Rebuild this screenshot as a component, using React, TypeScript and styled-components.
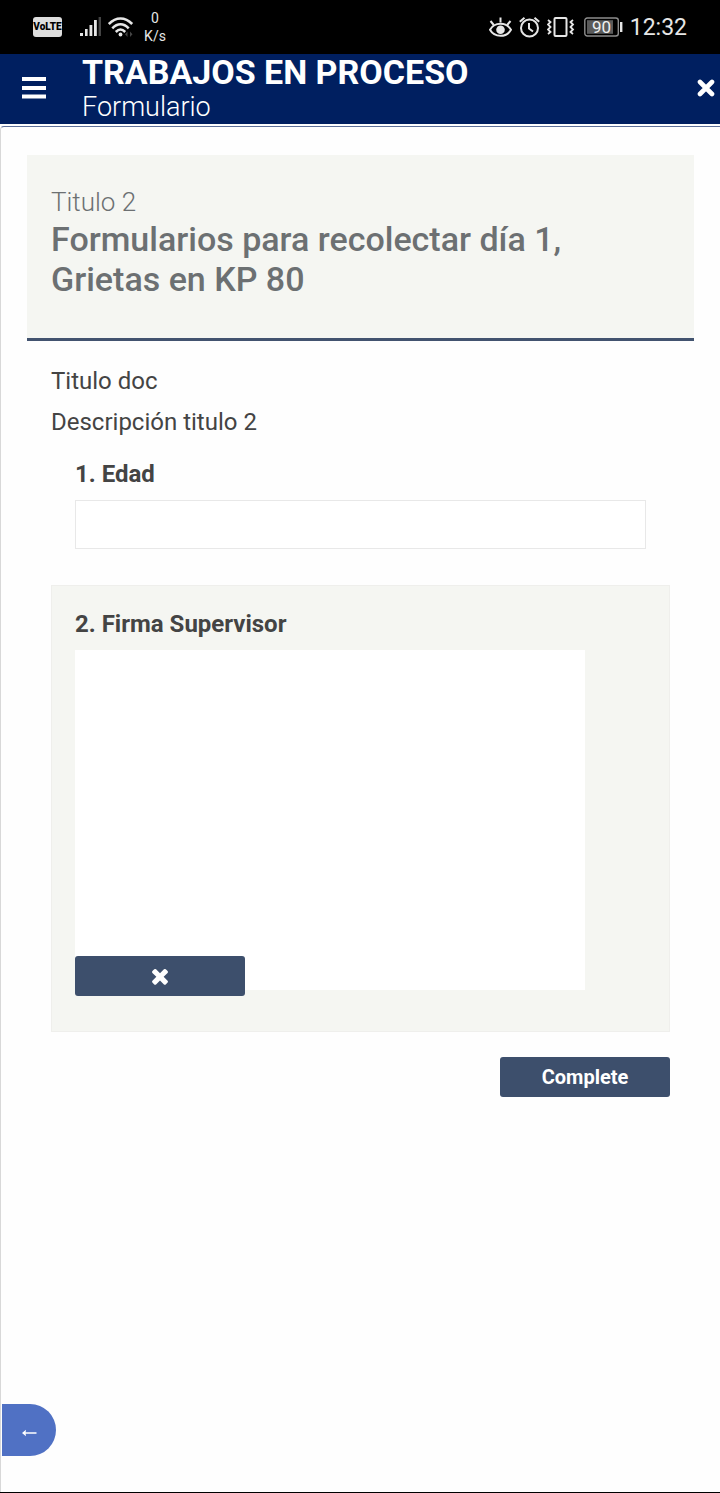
import React from "react";
import styled, { createGlobalStyle } from "styled-components";

const GlobalStyle = createGlobalStyle`
  *, *::before, *::after { box-sizing: border-box; }
  body { margin: 0; background: #fefefe; }
  body, button, input { font-family: Roboto, "Liberation Sans", sans-serif; }
  h1, h2, p { margin: 0; }
`;

const Page = styled.div`
  min-height: 100vh;
  display: flex;
  flex-direction: column;
  border-bottom: 1px solid #000;
`;

const StatusBar = styled.div`
  height: 54px;
  padding: 0 33px;
  display: flex;
  align-items: center;
  justify-content: space-between;
  background: #000;
  color: #e6e6e6;
`;

const StatusGroup = styled.div<{ $gap: number }>`
  display: flex;
  align-items: center;
  gap: ${(p) => p.$gap}px;
  svg { display: block; flex: none; }
`;

const VolteBadge = styled.span`
  width: 29px;
  height: 20px;
  margin-right: 12px;
  border-radius: 3px;
  background: #dedede;
  color: #000;
  font-size: 10px;
  font-weight: 900;
  line-height: 20px;
  text-align: center;
`;

const NetSpeed = styled.span`
  width: 24px;
  margin-left: 3px;
  font-size: 14px;
  line-height: 18px;
  text-align: center;
`;

const Clock = styled.span`
  padding-top: 2px;
  font-size: 23px;
  line-height: 28px;
`;

const Header = styled.header`
  height: 70px;
  padding: 0 5px 2px 22px;
  display: flex;
  align-items: center;
  background: #001f60;
  color: #fff;
`;

const Titles = styled.div`
  flex: 1;
  margin-left: 36px;
`;

const AppTitle = styled.h1`
  font-size: 34px;
  font-weight: 700;
  line-height: 36px;
`;

const AppSubtitle = styled.p`
  font-size: 27px;
  font-weight: 300;
  line-height: 32px;
  padding-top: 1px;
`;

const IconButton = styled.button`
  display: block;
  padding: 0;
  border: 0;
  background: none;
  color: inherit;
  cursor: pointer;
  svg { display: block; }
`;

const Content = styled.main`
  flex: 1;
  margin-top: 2px;
  padding: 28px 26px;
  border-top: 1px solid #5d6f98;
  border-left: 1px solid #d8d8d8;
  border-top-left-radius: 4px;
`;

const Banner = styled.section`
  height: 186px;
  padding: 30px 24px;
  border-bottom: 3px solid #42536f;
  background: #f5f6f2;
  color: #6c7072;
`;

const BannerLabel = styled.p`
  font-size: 26px;
  font-weight: 300;
  line-height: 34px;
`;

const BannerTitle = styled.h2`
  font-size: 34px;
  font-weight: 500;
  line-height: 40px;
`;

const Form = styled.form`
  padding: 20px 24px 0;
  color: #444;
`;

const Text = styled.p`
  font-size: 24px;
  line-height: 41px;
`;

const Field = styled.div<{ $shaded?: boolean }>`
  padding: ${(p) => (p.$shaded ? "24px 23px 35px" : "17px 24px 36px")};
  border: ${(p) => (p.$shaded ? "1px solid #efefec" : "0")};
  background: ${(p) => (p.$shaded ? "#f5f6f2" : "transparent")};
`;

const FieldLabel = styled.label`
  display: block;
  margin-bottom: 11px;
  font-size: 24px;
  font-weight: 700;
  line-height: 29px;
`;

const TextInput = styled.input`
  display: block;
  width: 100%;
  height: 49px;
  padding: 0 12px;
  border: 1px solid #e8e8e8;
  border-radius: 0;
  background: #fff;
  font-size: 24px;
`;

const SignaturePad = styled.canvas`
  display: block;
  width: 100%;
  max-width: 510px;
  height: 340px;
  background: #fff;
`;

const ActionButton = styled.button<{ $overlap?: boolean }>`
  display: flex;
  align-items: center;
  justify-content: center;
  position: relative;
  width: 170px;
  height: 40px;
  margin-top: ${(p) => (p.$overlap ? "-34px" : "0")};
  padding: 0;
  border: 0;
  border-radius: 3px;
  background: #3d4f6c;
  color: #fff;
  font-size: 20px;
  font-weight: 700;
  cursor: pointer;
`;

const Actions = styled.div`
  display: flex;
  justify-content: flex-end;
  padding-top: 25px;
`;

const BackButton = styled.button`
  position: fixed;
  left: 2px;
  bottom: 37px;
  display: flex;
  align-items: center;
  width: 54px;
  height: 52px;
  padding: 6px 0 0 20px;
  border: 0;
  border-radius: 0 26px 26px 0;
  background: #5071c4;
  color: #fff;
  cursor: pointer;
`;

const SignalIcon = () => (
  <svg width="22" height="22" viewBox="0 0 22 22" fill="#e6e6e6">
    <rect x="0" y="17" width="3" height="3" />
    <rect x="5" y="13" width="2.6" height="7" />
    <rect x="9.5" y="9" width="2.8" height="11" />
    <rect x="14" y="4" width="2.8" height="16" />
    <rect x="18.6" y="1" width="2.4" height="19" fill="#444" />
  </svg>
);

const WifiIcon = () => (
  <svg width="26" height="22" viewBox="0 0 26 22" fill="none" stroke="#e6e6e6" strokeWidth="2.6">
    <path d="M.8 8C8 .6 17 .6 24.200 8" />
    <path d="M4.300 12.300C9.500 6.900 15.500 6.900 20.700 12.300" />
    <path d="M7.800 16C11 12.700 14 12.700 17.200 16" />
    <circle cx="12.500" cy="18.500" r="1.900" fill="#e6e6e6" stroke="none" />
    <path d="m19.500 15.500-2.500 2.700 2.500 2.700zM22 15.500l2.500 2.700L22 20.900z" fill="#444" stroke="none" />
  </svg>
);

const EyeIcon = () => (
  <svg width="23" height="22" viewBox="0 0 23 22" fill="none" stroke="#e6e6e6" strokeWidth="2">
    <path d="M1 13.800C5.500 5.800 17.500 5.800 22 13.800C17.500 21.800 5.500 21.800 1 13.800Z" />
    <circle cx="11.500" cy="13.800" r="4.300" fill="#e6e6e6" stroke="none" />
    <path d="M11.500 1.500v5M1.500 5l3.300 4M21.500 5l-3.300 4" />
  </svg>
);

const AlarmIcon = () => (
  <svg width="21" height="22" viewBox="0 0 21 22" fill="none" stroke="#e6e6e6" strokeWidth="2">
    <circle cx="10.500" cy="12" r="8.500" />
    <path d="M10 7v5.500l4 3M.8 5.800 5.500 1.800M20.200 5.800l-4.700-4" />
  </svg>
);

const VibrateIcon = () => (
  <svg width="30" height="22" viewBox="0 0 30 22" fill="none" stroke="#e6e6e6" strokeWidth="2">
    <rect x="7.500" y="2" width="12" height="18" rx="1" />
    <path d="m1 4 2.500 2L1 8.500 3.500 11 1 13.500 3.500 16 1 18M26 4l-2.500 2L26 8.500 23.500 11l2.500 2.500-2.500 2.500 2.500 2" strokeWidth="1.800" />
  </svg>
);

const BatteryIcon = () => (
  <svg width="39" height="20" viewBox="0 0 39 20">
    <rect x=".8" y="1" width="33.500" height="18" rx="2.500" fill="none" stroke="#8c8c8c" strokeWidth="1.400" />
    <rect x="3" y="3.200" width="26" height="13.600" fill="#5a5a5a" />
    <rect x="36" y="5" width="2.400" height="10" fill="#e6e6e6" />
    <text x="17.500" y="15.700" textAnchor="middle" fontFamily="Roboto, sans-serif" fontSize="17" fill="#f0f0f0">90</text>
  </svg>
);

const MenuIcon = () => (
  <svg width="24" height="22" viewBox="0 0 24 22" fill="currentColor">
    <rect y="0" width="24" height="4" />
    <rect y="9" width="24" height="4" />
    <rect y="17.500" width="24" height="4" />
  </svg>
);

const CloseIcon = () => (
  <svg width="18" height="18" viewBox="0 0 18 18" fill="none" stroke="currentColor" strokeWidth="4.600" strokeLinecap="round">
    <path d="m3 3 12 12M15 3 3 15" />
  </svg>
);

const ClearIcon = () => (
  <svg width="24" height="24" viewBox="0 0 1792 1792" fill="currentColor">
    <path d="M1490 1322q0 40-28 68l-136 136q-28 28-68 28t-68-28l-294-294-294 294q-28 28-68 28t-68-28l-136-136q-28-28-28-68t28-68l294-294-294-294q-28-28-28-68t28-68l136-136q28-28 68-28t68 28l294 294 294-294q28-28 68-28t68 28l136 136q28 28 28 68t-28 68l-294 294 294 294q28 28 28 68z" />
  </svg>
);

const BackIcon = () => (
  <svg width="15" height="8" viewBox="0 0 15 8">
    <path d="M3 4h11.500" stroke="currentColor" strokeWidth="1.500" />
    <path d="M0 4 4 .8 3.500 4 4 7.200z" fill="currentColor" />
  </svg>
);

export default function App() {
  return (
    <>
      <GlobalStyle />
      <Page>
        <StatusBar>
          <StatusGroup $gap={6}>
            <VolteBadge>VoLTE</VolteBadge>
            <SignalIcon />
            <WifiIcon />
            <NetSpeed>0<br />K/s</NetSpeed>
          </StatusGroup>
          <StatusGroup $gap={7}>
            <EyeIcon />
            <AlarmIcon />
            <VibrateIcon />
            <BatteryIcon />
            <Clock>12:32</Clock>
          </StatusGroup>
        </StatusBar>
        <Header>
          <IconButton type="button" aria-label="Menú"><MenuIcon /></IconButton>
          <Titles>
            <AppTitle>TRABAJOS EN PROCESO</AppTitle>
            <AppSubtitle>Formulario</AppSubtitle>
          </Titles>
          <IconButton type="button" aria-label="Cerrar"><CloseIcon /></IconButton>
        </Header>
        <Content>
          <Banner>
            <BannerLabel>Titulo 2</BannerLabel>
            <BannerTitle>Formularios para recolectar día 1, Grietas en KP 80</BannerTitle>
          </Banner>
          <Form onSubmit={(e: React.FormEvent) => e.preventDefault()}>
            <Text>Titulo doc</Text>
            <Text>Descripción titulo 2</Text>
            <Field>
              <FieldLabel htmlFor="edad">1. Edad</FieldLabel>
              <TextInput id="edad" type="text" />
            </Field>
            <Field $shaded>
              <FieldLabel as="p" id="firma">2. Firma Supervisor</FieldLabel>
              <SignaturePad aria-labelledby="firma" />
              <ActionButton type="button" $overlap aria-label="Borrar firma"><ClearIcon /></ActionButton>
            </Field>
            <Actions>
              <ActionButton type="submit">Complete</ActionButton>
            </Actions>
          </Form>
        </Content>
        <BackButton type="button" aria-label="Volver"><BackIcon /></BackButton>
      </Page>
    </>
  );
}
